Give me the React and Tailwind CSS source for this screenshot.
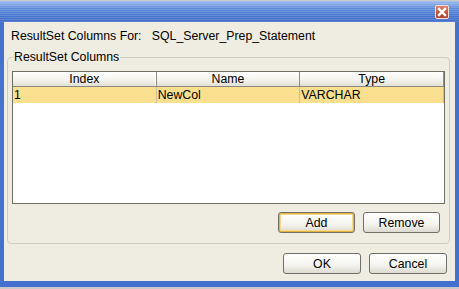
import React from "react";

function Btn({ children, focus, w = "w-[77px]" }) {
  return (
    <div
      className={`${w} h-[21px] rounded-[3px] border border-[#70706a] bg-[linear-gradient(180deg,#ffffff,#f4f3ee_60%,#dcdad0)] flex items-center justify-center ${
        focus ? "shadow-[inset_0_0_0_1px_#e5b33f,inset_0_0_0_2px_#f7d98b]" : ""
      }`}
    >
      <span className="leading-[14px]">{children}</span>
    </div>
  );
}

export default function App() {
  return (
    <div className="w-[459px] h-[289px] bg-[#c9c9c9] pt-px text-[12.3px] text-black font-['Liberation_Sans',Arial,sans-serif]">
      <div className="h-[286px] flex flex-col bg-[#4471cd]">
        {/* title bar */}
        <div className="h-[21px] flex justify-end items-start pt-[4px] pr-[10px] bg-[repeating-linear-gradient(180deg,rgba(255,255,255,0.14)_0px,rgba(255,255,255,0.14)_1px,transparent_1px,transparent_2px),linear-gradient(180deg,#9cbaec,#5e8cdb_35%,#4674cd_75%,#3f6cc9)]">
          <div className="w-[14px] h-[14px] rounded-[2px] border border-[#f3e0da] bg-[linear-gradient(180deg,#d9836f,#bf4f3c_60%,#b04432)] flex items-center justify-center">
            <svg width="10" height="10" viewBox="0 0 10 10">
              <path d="M2 2 L8 8 M8 2 L2 8" stroke="#ffffff" strokeWidth="2.4" strokeLinecap="square" />
            </svg>
          </div>
        </div>
        {/* content */}
        <div className="flex-1 mx-[4px] mb-[6px] bg-[#efece1] flex flex-col">
          <div className="mt-[7px] ml-[7px] leading-[14px] h-[14px] whitespace-pre">
            {"ResultSet Columns For:   SQL_Server_Prep_Statement"}
          </div>
          <fieldset className="mt-[7px] ml-[3px] mr-[5px] h-[194px] border border-[#cfcdbf] rounded-[4px] flex flex-col">
            <legend className="ml-[5px] px-[1px] leading-[14px]">ResultSet Columns</legend>
            <div className="mt-[7px] ml-[4px] mr-[4px] h-[133px] border border-[#6f6f62] bg-white flex flex-col">
              <div className="h-[15px] grid grid-cols-3 border-b border-[#8a8a80] bg-[linear-gradient(180deg,#ffffff,#f6f5f0_50%,#e3e1d6)]">
                <div className="flex items-center justify-center leading-[14px] border-r border-[#8d8d85] shadow-[inset_-1px_0_0_#ffffff]">Index</div>
                <div className="flex items-center justify-center leading-[14px] border-r border-[#8d8d85]">Name</div>
                <div className="flex items-center justify-center leading-[14px] border-r border-[#8d8d85]">Type</div>
              </div>
              <div className="h-[16px] grid grid-cols-3 bg-[#f9df8e]">
                <div className="pl-[1px] leading-[16px] border-r border-[#c9c0a0]">1</div>
                <div className="pl-[1px] leading-[16px] border-r border-[#c9c0a0]">NewCol</div>
                <div className="pl-[1px] leading-[16px] border-r border-[#c9c0a0]">VARCHAR</div>
              </div>
            </div>
            <div className="mt-[8px] mr-[9px] flex justify-end gap-[8px]">
              <Btn focus>Add</Btn>
              <Btn>Remove</Btn>
            </div>
          </fieldset>
          <div className="mt-[9px] mr-[8px] flex justify-end gap-[8px]">
            <Btn w="w-[78px]">OK</Btn>
            <Btn w="w-[78px]">Cancel</Btn>
          </div>
        </div>
      </div>
    </div>
  );
}
